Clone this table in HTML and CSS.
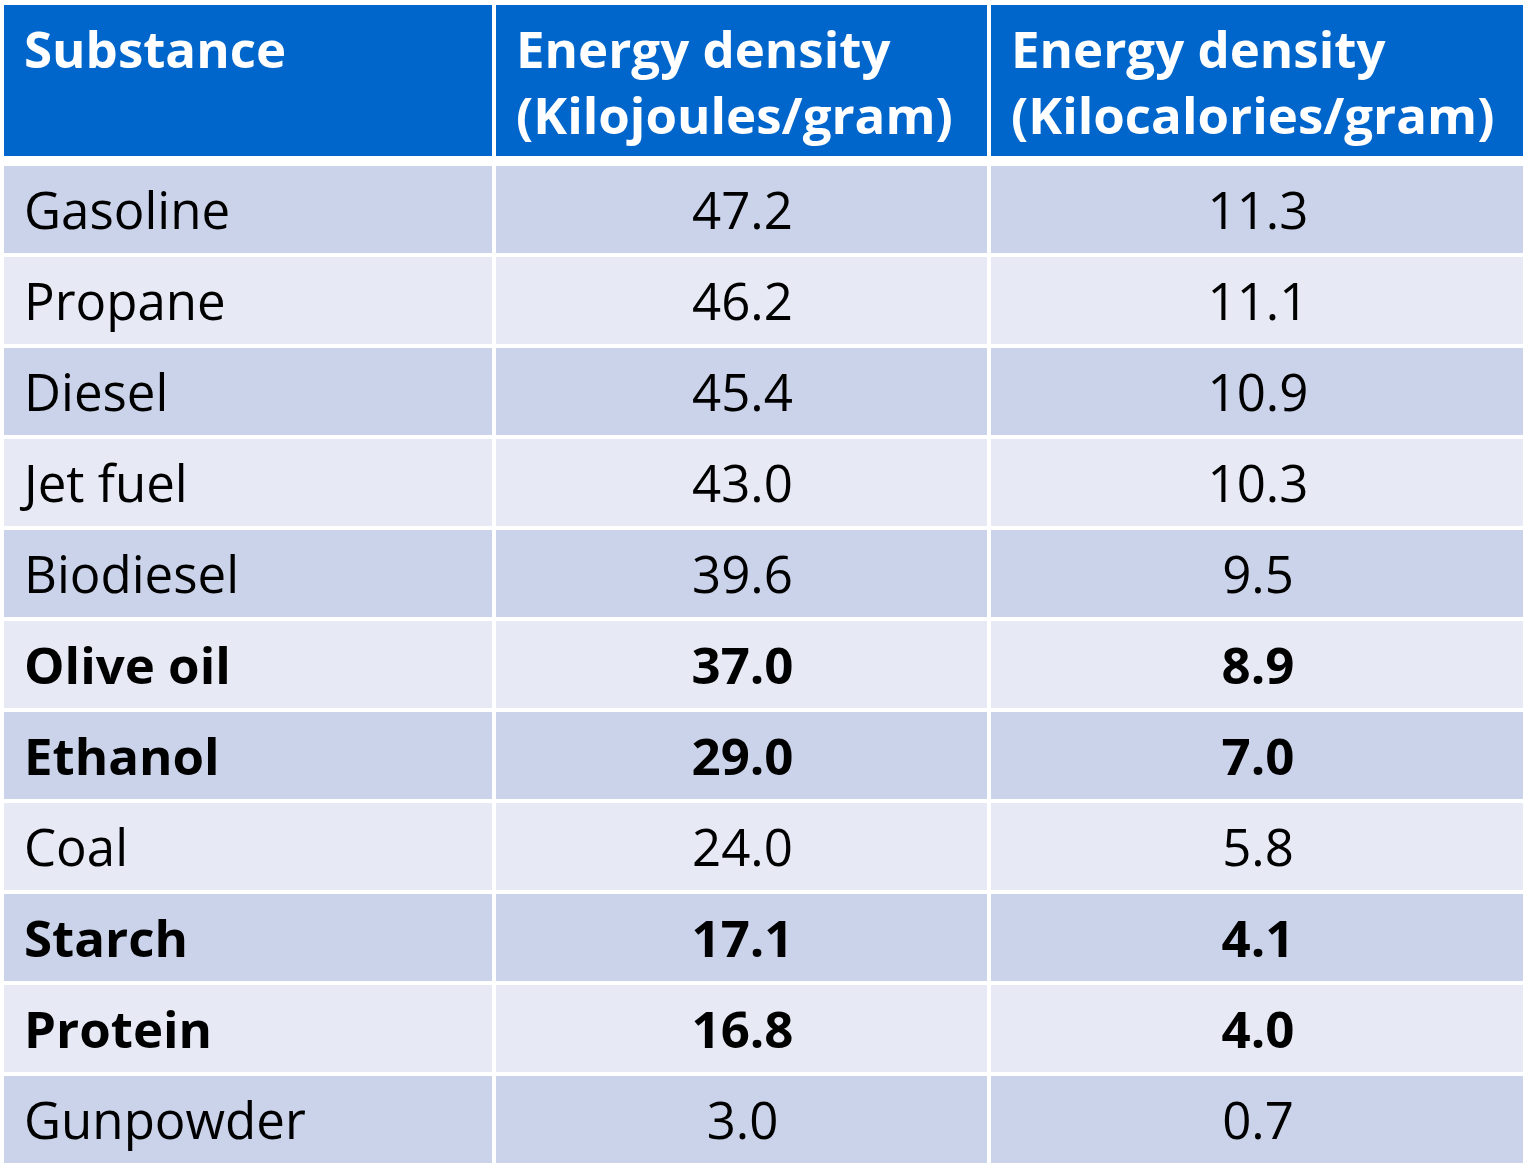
FILE: index.html
```html
<!DOCTYPE html>
<html lang="en">
<head>
<meta charset="utf-8">
<title>Energy density</title>
<link rel="stylesheet" href="styles.css">
</head>
<body>
<div class="table">
  <div class="row head">
    <div class="cell">Substance</div>
    <div class="cell">Energy density<br>(Kilojoules/gram)</div>
    <div class="cell">Energy density<br>(Kilocalories/gram)</div>
  </div>
  <div class="row dark"><div class="cell">Gasoline</div><div class="cell num">47.2</div><div class="cell num">11.3</div></div>
  <div class="row light"><div class="cell">Propane</div><div class="cell num">46.2</div><div class="cell num">11.1</div></div>
  <div class="row dark"><div class="cell">Diesel</div><div class="cell num">45.4</div><div class="cell num">10.9</div></div>
  <div class="row light"><div class="cell">Jet fuel</div><div class="cell num">43.0</div><div class="cell num">10.3</div></div>
  <div class="row dark"><div class="cell">Biodiesel</div><div class="cell num">39.6</div><div class="cell num">9.5</div></div>
  <div class="row light bold"><div class="cell">Olive oil</div><div class="cell num">37.0</div><div class="cell num">8.9</div></div>
  <div class="row dark bold"><div class="cell">Ethanol</div><div class="cell num">29.0</div><div class="cell num">7.0</div></div>
  <div class="row light"><div class="cell">Coal</div><div class="cell num">24.0</div><div class="cell num">5.8</div></div>
  <div class="row dark bold"><div class="cell">Starch</div><div class="cell num">17.1</div><div class="cell num">4.1</div></div>
  <div class="row light bold"><div class="cell">Protein</div><div class="cell num">16.8</div><div class="cell num">4.0</div></div>
  <div class="row dark"><div class="cell">Gunpowder</div><div class="cell num">3.0</div><div class="cell num">0.7</div></div>
</div>
</body>
</html>
```
FILE: styles.css
```css
html, body {
  margin: 0;
  padding: 0;
  background: #ffffff;
}
body {
  font-family: "Open Sans", "Noto Sans", sans-serif;
  color: #000000;
}
.table {
  display: flex;
  flex-direction: column;
  gap: 4px;
  padding: 5px 4px 4px 4px;
  width: 1523px;
  box-sizing: border-box;
}
.row {
  display: grid;
  grid-template-columns: 488px 491px 532px;
  column-gap: 4px;
  height: 87px;
}
.cell {
  display: flex;
  align-items: center;
  padding: 0 20px;
  font-size: 51px;
  line-height: 1;
}
.num {
  justify-content: center;
  padding-left: 22px;
}
.head {
  height: 151px;
  margin-bottom: 6px;
}
.head .cell {
  background: #0066cc;
  color: #ffffff;
  font-weight: 700;
  align-items: flex-start;
  line-height: 66px;
  padding-top: 10px;
  padding-left: 20px;
}
.dark .cell {
  background: #cbd3ea;
}
.light .cell {
  background: #e7eaf5;
}
.bold .cell {
  font-weight: 700;
}
```
